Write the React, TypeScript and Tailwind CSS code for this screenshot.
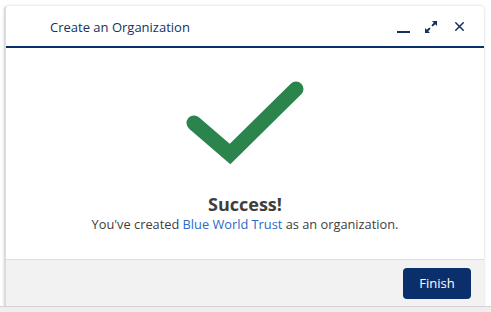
import { X } from "lucide-react";

function ExpandIcon() {
  return (
    <svg width="14" height="14" viewBox="0 0 14 14" fill="#16325c">
      <path d="M8 1h5v5l-1.8-1.8-2.4 2.4-1.4-1.4 2.4-2.4z" />
      <path d="M6 13H1V8l1.8 1.8 2.4-2.4 1.4 1.4-2.4 2.4z" />
    </svg>
  );
}

export default function App() {
  return (
    <div className="w-[491px] h-[312px] bg-white flex flex-col" style={{ fontFamily: '"Open Sans", "Noto Sans", sans-serif' }}>
      <div className="flex-1 pt-[6px] pl-[4px] pr-[7px]">
        <div className="h-full flex flex-col rounded-t-[4px] border-l-2 border-[#dcdcdc] bg-white shadow-[0_0_3px_rgba(0,0,0,0.18)] overflow-hidden">
          <div className="h-[42px] flex items-center border-b-2 border-[#0b2f6b] pl-[44px] pr-[17px]">
            <span className="text-[13px] text-[#16325c] leading-none pt-[2px]">Create an Organization</span>
            <div className="ml-auto flex items-center gap-[14px] text-[#16325c]">
              <div className="w-[13px] h-[2px] bg-[#16325c] mt-[12px]" />
              <div className="mt-[2px]">
                <ExpandIcon />
              </div>
              <X size={15} strokeWidth={2.4} className="mt-[1px]" />
            </div>
          </div>
          <div className="flex-1 flex flex-col items-center bg-white pt-[26px]">
            <svg width="126" height="94" viewBox="0 0 126 94">
              <path
                d="M12 49 L48 80 L114 15"
                fill="none"
                stroke="#2a844c"
                strokeWidth="15"
                strokeLinecap="round"
                strokeLinejoin="miter"
              />
            </svg>
            <div className="mt-[27px] text-[18px] font-bold text-[#3e3e3c] leading-none">Success!</div>
            <div className="mt-[5px] text-[12.8px] text-[#3e3e3c] leading-none">
              You've created <span className="text-[#2a6acb]">Blue World Trust</span> as an organization.
            </div>
          </div>
          <div className="h-[47px] bg-[#f2f2f2] border-t border-[#dddddd] flex items-center justify-end pr-[13px]">
            <button className="w-[68px] h-[31px] rounded-[4px] bg-[#0b2f6b] text-white text-[13px] mt-[1px]">Finish</button>
          </div>
        </div>
      </div>
      <div className="h-[6px] bg-[#efefef] border-t border-[#d4d4d4]" />
    </div>
  );
}
